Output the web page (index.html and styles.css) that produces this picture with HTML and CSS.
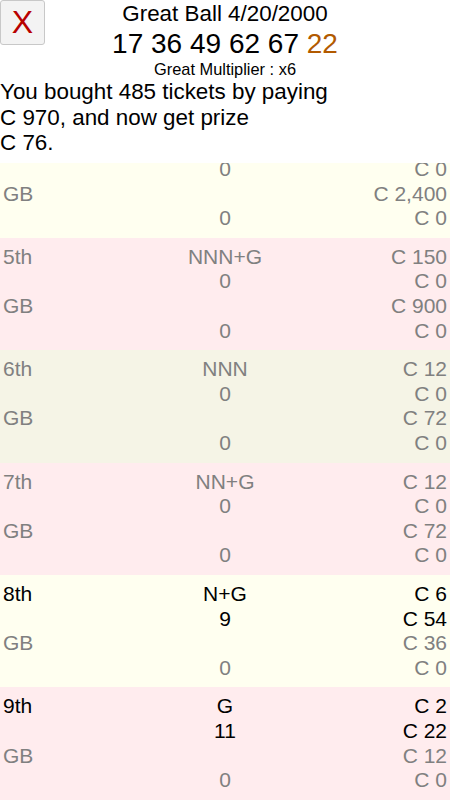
FILE: index.html
```html
<!DOCTYPE html>
<html>
<head>
<meta charset="utf-8">
<link rel="stylesheet" href="styles.css">
</head>
<body>
<div class="page">
  <header class="head">
    <button class="close">X</button>
    <div class="title">Great Ball 4/20/2000</div>
    <div class="nums">17 36 49 62 67 <span class="bonus">22</span></div>
    <div class="mult">Great Multiplier : x6</div>
    <div class="summary">You bought 485 tickets by paying<br>C 970, and now get prize<br>C 76.</div>
  </header>
  <div class="list">
    <div class="inner">
      <div class="block ivory">
        <div class="row"><span class="l">4th</span><span class="m">NNNN</span><span class="r">C 400</span></div>
        <div class="row"><span class="l"></span><span class="m">0</span><span class="r">C 0</span></div>
        <div class="row"><span class="l">GB</span><span class="m"></span><span class="r">C 2,400</span></div>
        <div class="row"><span class="l"></span><span class="m">0</span><span class="r">C 0</span></div>
      </div>
      <div class="block pink">
        <div class="row"><span class="l">5th</span><span class="m">NNN+G</span><span class="r">C 150</span></div>
        <div class="row"><span class="l"></span><span class="m">0</span><span class="r">C 0</span></div>
        <div class="row"><span class="l">GB</span><span class="m"></span><span class="r">C 900</span></div>
        <div class="row"><span class="l"></span><span class="m">0</span><span class="r">C 0</span></div>
      </div>
      <div class="block beige">
        <div class="row"><span class="l">6th</span><span class="m">NNN</span><span class="r">C 12</span></div>
        <div class="row"><span class="l"></span><span class="m">0</span><span class="r">C 0</span></div>
        <div class="row"><span class="l">GB</span><span class="m"></span><span class="r">C 72</span></div>
        <div class="row"><span class="l"></span><span class="m">0</span><span class="r">C 0</span></div>
      </div>
      <div class="block pink">
        <div class="row"><span class="l">7th</span><span class="m">NN+G</span><span class="r">C 12</span></div>
        <div class="row"><span class="l"></span><span class="m">0</span><span class="r">C 0</span></div>
        <div class="row"><span class="l">GB</span><span class="m"></span><span class="r">C 72</span></div>
        <div class="row"><span class="l"></span><span class="m">0</span><span class="r">C 0</span></div>
      </div>
      <div class="block ivory">
        <div class="row win"><span class="l">8th</span><span class="m">N+G</span><span class="r">C 6</span></div>
        <div class="row win"><span class="l"></span><span class="m">9</span><span class="r">C 54</span></div>
        <div class="row"><span class="l">GB</span><span class="m"></span><span class="r">C 36</span></div>
        <div class="row"><span class="l"></span><span class="m">0</span><span class="r">C 0</span></div>
      </div>
      <div class="block pink">
        <div class="row win"><span class="l">9th</span><span class="m">G</span><span class="r">C 2</span></div>
        <div class="row win"><span class="l"></span><span class="m">11</span><span class="r">C 22</span></div>
        <div class="row"><span class="l">GB</span><span class="m"></span><span class="r">C 12</span></div>
        <div class="row"><span class="l"></span><span class="m">0</span><span class="r">C 0</span></div>
      </div>
    </div>
  </div>
</div>
</body>
</html>
```

FILE: styles.css
```css
* { box-sizing: border-box; }
html, body { margin: 0; padding: 0; background: #fff; }
body { font-family: "Liberation Sans", Arial, sans-serif; color: #000; }
.page { display: flex; flex-direction: column; height: 800px; overflow: hidden; }
.head { position: relative; flex: none; height: 163px; }
.close {
  position: absolute; left: 0; top: 0;
  width: 45px; height: 45px;
  margin: 0; padding: 0;
  border: 1px solid #c8c8c8; border-radius: 3px;
  background: #f3f3f3; color: #b80000;
  font-family: "Liberation Sans", Arial, sans-serif; font-size: 32px; line-height: 43px;
  text-align: center;
}
.title { text-align: center; font-size: 22.4px; line-height: 27px; }
.nums { text-align: center; font-size: 28px; line-height: 33px; }
.bonus { color: #b25a00; }
.mult { text-align: center; font-size: 16.4px; line-height: 18px; margin-bottom: 1px; }
.summary { font-size: 22.4px; line-height: 25.5px; }
.list { flex: 1; overflow: hidden; }
.inner { margin-top: -37.5px; }
.block { padding: 7px 3px; }
.ivory { background: #fffff0; }
.pink { background: #ffecee; }
.beige { background: #f5f4e6; }
.row { display: grid; grid-template-columns: 1fr 1fr 1fr; font-size: 21px; line-height: 24.6px; color: #808080; }
.row.win { color: #000; }
.row .l { text-align: left; }
.row .m { text-align: center; }
.row .r { text-align: right; }
```
